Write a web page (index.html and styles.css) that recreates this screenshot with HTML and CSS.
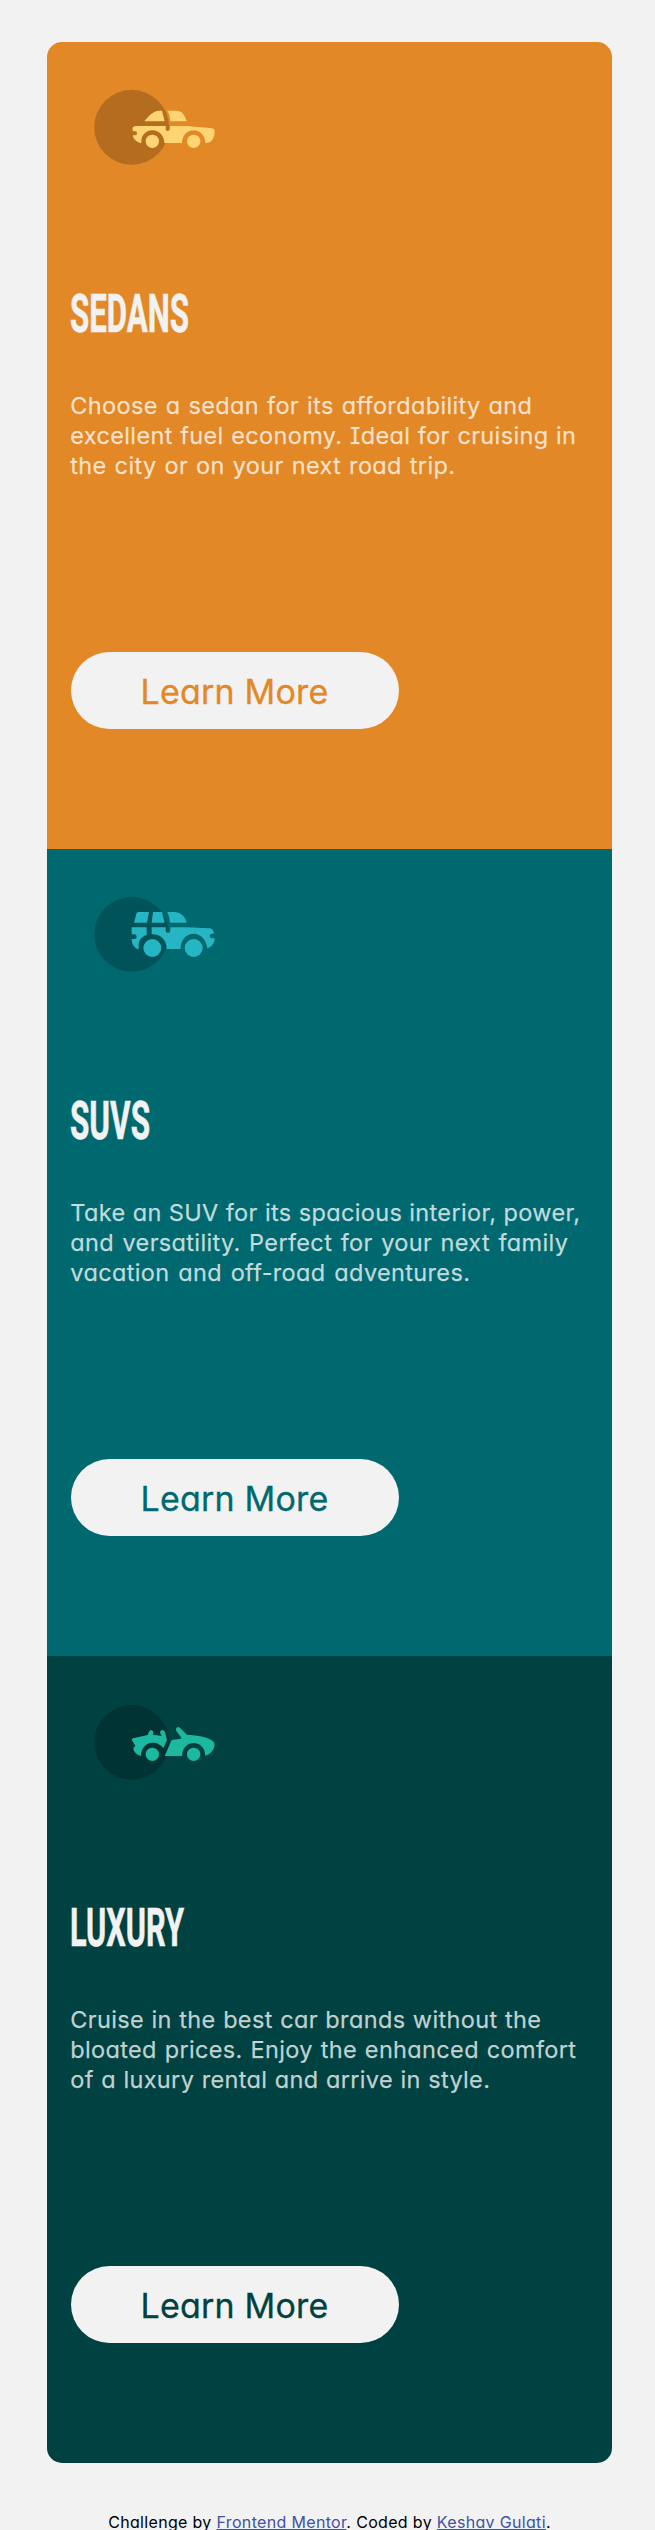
FILE: index.html
```html
<!DOCTYPE html>
<html lang="en">
<head>
<meta charset="utf-8">
<title>3-column preview card component</title>
<link rel="stylesheet" href="styles.css">
</head>
<body>
<main class="cards">
  <section class="card sedans">
    <svg class="icon" viewBox="0 0 450 315">
      <circle cx="155" cy="157" r="112.5" fill="#000" fill-opacity=".2"/>
      <g fill="#ffd473">
        <path d="M193 139C205 125 218 107 238 107H246L254 139ZM262 107H290C305 107 314 118 320 139H271Q270 120 262 107Z"/>
        <path d="M157 158q5-6 12-5H257v10q0 5 6 5t7-5V153H320C350 156 380 158 396 160q8 1 8 8C404 190 395 204 376 204C376 185 362 166 341 166s-35 18-35 38H253c0-20-15-38-36-38s-35 17-33 38C170 203 160 192 158 181h8q5 0 5-6t-5-6h-7z"/>
        <circle cx="217" cy="199" r="20"/><circle cx="341" cy="199" r="20"/>
      </g>
    </svg>
    <h2 class="title"><svg width="130" height="56"><text x="-1" y="48" textLength="119" lengthAdjust="spacingAndGlyphs">SEDANS</text></svg></h2>
    <p class="copy"><span style="width:462px">Choose a sedan for its affordability and</span> <span style="width:506px">excellent fuel economy. <i class="serif-i">I</i>deal for cruising in</span> <span style="width:385px">the city or on your next road trip.</span></p>
    <a class="button">Learn More</a>
  </section>
  <section class="card suvs">
    <svg class="icon" viewBox="0 0 450 315">
      <circle cx="155" cy="157" r="112.5" fill="#000" fill-opacity=".2"/>
      <g fill="#26b5c3">
        <path d="M162 122L169 95Q170 90 175 90H207L201 122ZM219 90H246L254 122H215ZM262 90H285C305 92 316 105 320 122H270Q269 105 262 90Z"/>
        <path d="M155 136H200V159C186 163 177 174 176 187V202C165 200 155 188 155 171h9q6-1 6-7t-6-7h-9z"/>
        <path d="M215 136H257v10q0 6 7 6t7-6V136H310C340 137 370 138 390 139q9 1 12 16H395q-6 1-6 7t6 7H404c0 14-8 26-22 30C380 175 362 155 341 155C318 155 301 175 302 201H260C260 175 243 157 217 157h-2z"/>
        <circle cx="217" cy="198" r="27"/><circle cx="341" cy="198" r="27"/>
      </g>
    </svg>
    <h2 class="title"><svg width="130" height="56"><text x="-1" y="48" textLength="80" lengthAdjust="spacingAndGlyphs">SUVS</text></svg></h2>
    <p class="copy"><span style="width:510px">Take an SUV for its spacious interior, power,</span> <span style="width:498px">and versatility. Perfect for your next family</span> <span style="width:400px">vacation and off-road adventures.</span></p>
    <a class="button">Learn More</a>
  </section>
  <section class="card luxury">
    <svg class="icon" viewBox="0 0 450 315">
      <circle cx="155" cy="160" r="112.5" fill="#000" fill-opacity=".2"/>
      <g fill="#1cb9a0">
        <path d="M155 152q2-4 8-5L203 138l4-10q3-5 8-4q6 2 5 7l-1 7q12 0 26 3l-5-10q0-7 7-8q6 0 8 7L261 153L250 177C243 167 230 161 217 161C198 161 183 178 183 201C170 198 161 188 160 178l6-8z"/>
        <path d="M275 153L302 149Q305 148 304 146L289 126q-3-6 1-10q6-4 10 1L322 138C350 138 390 145 402 160C408 175 395 196 376 200C376 178 360 162 341 162C320 162 306 180 306 201H254Z"/>
        <circle cx="217" cy="196" r="20"/><circle cx="341" cy="196" r="20"/>
      </g>
    </svg>
    <h2 class="title"><svg width="130" height="56"><text x="-1" y="48" textLength="114" lengthAdjust="spacingAndGlyphs">LUXURY</text></svg></h2>
    <p class="copy"><span style="width:471px">Cruise in the best car brands without the</span> <span style="width:506px">bloated prices. Enjoy the enhanced comfort</span> <span style="width:420px">of a luxury rental and arrive in style.</span></p>
    <a class="button">Learn More</a>
  </section>
</main>
<footer class="attribution">Challenge by <a href="#">Frontend Mentor</a>. Coded by <a href="#">Keshav Gulati</a>.</footer>
</body>
</html>
```
FILE: styles.css
```css
* { box-sizing: border-box; }
html { overflow: hidden; }
body {
  margin: 0;
  height: 2530px;
  padding-top: 42px;
  overflow: hidden;
  background: #f2f2f2;
  font-family: Inter, "Open Sans", sans-serif;
  font-feature-settings: "cv11";
}
.cards {
  width: 565.8px;
  margin-left: 46.6px;
  border-radius: 15px;
  overflow: hidden;
}
.card {
  height: 807px;
  padding: 33px 24px 0;
  display: flex;
  flex-direction: column;
  align-items: flex-start;
}
.sedans { background: #e28826; color: #e28826; }
.suvs { background: #006970; color: #006970; }
.luxury { background: #004241; color: #004241; }
.icon { width: 150px; height: 105px; margin-left: 9.4px; }
.title { margin: 104px 0 0; height: 56px; }
.title svg { display: block; overflow: visible; }
.title text {
  font: 700 53.5px Roboto, sans-serif;
  fill: #f2f2f2;
  stroke: #f2f2f2;
  stroke-width: .6px;
}
.copy {
  margin: 51px 0 0 -.3px;
  height: 90px;
  font-size: 23.5px;
  letter-spacing: .35px;
  line-height: 30px;
  color: rgba(255, 255, 255, .75);
  -webkit-text-stroke: .25px rgba(255, 255, 255, .5);
}
.copy span {
  display: block;
  white-space: nowrap;
  text-align-last: justify;
}
.serif-i { font-style: normal; font-feature-settings: "cv08"; }
.button {
  margin-top: 171px;
  width: 328px;
  height: 77px;
  padding-top: 1px;
  border-radius: 39px;
  background: #f2f2f2;
  font-size: 34px;
  letter-spacing: .2px;
  line-height: 77px;
  text-align: center;
  -webkit-text-stroke: .3px currentColor;
}
.attribution {
  margin-top: 49px;
  padding-left: 4px;
  font-size: 16px;
  letter-spacing: .33px;
  line-height: 20px;
  text-align: center;
  white-space: nowrap;
}
.attribution a { color: #3e52a3; text-underline-offset: 1px; text-decoration-skip-ink: none; }
```
